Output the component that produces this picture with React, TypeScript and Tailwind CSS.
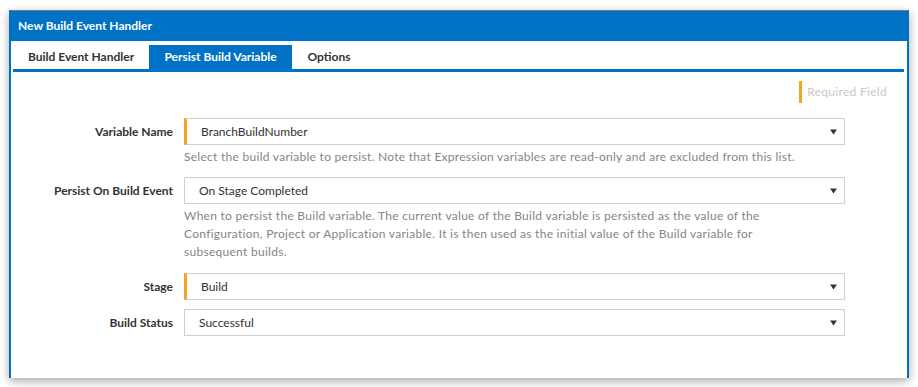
const font = { fontFamily: 'Lato, "Open Sans", sans-serif' };

const Arrow = () => (
  <svg width="7" height="7" viewBox="0 0 7 7" className="shrink-0">
    <path d="M0 1.5h7L3.5 6.5z" fill="#333" />
  </svg>
);

type SelectProps = { value: string; required?: boolean };

const FakeSelect = ({ value, required }: SelectProps) => (
  <div
    className={`flex items-center justify-between w-[661px] h-[27px] bg-white border border-[#cfcfcf] pr-[7px] ${
      required ? 'border-l-[3px] border-l-[#f5a32a] pl-[14px]' : 'pl-[14px]'
    }`}
  >
    <span className="text-[12px] text-[#333]">{value}</span>
    <Arrow />
  </div>
);

const Row = ({ label, children }: { label: string; children: React.ReactNode }) => (
  <div className="flex items-start">
    <div className="w-[162px] h-[27px] flex items-center justify-end text-[12px] font-bold text-[#333]">{label}</div>
    <div className="ml-[11px]">{children}</div>
  </div>
);

const Help = ({ children }: { children: React.ReactNode }) => (
  <p className="mt-[3px] w-[661px] text-[12px] leading-[18px] tracking-[0.28px] text-[#858585]">{children}</p>
);

export default function App() {
  return (
    <div className="w-[918px] h-[387px] bg-white pt-[10px] pl-[9px]" style={font}>
      <div className="w-[900px] h-[368px] bg-white border-x-2 border-[#0072c6] border-t border-t-[#7a7a7a] shadow-[0_3px_9px_rgba(0,0,0,0.35)] flex flex-col">
        <div className="h-[30px] bg-[#0072c6] flex items-center pl-[7px] text-[12px] font-bold text-white">
          New Build Event Handler
        </div>

        <div className="pt-[4px] px-[2px] pr-[3px]">
          <div className="flex border-b-[3px] border-[#0072c6] text-[12px] font-bold">
            <div className="w-[136px] h-[24px] flex items-center justify-center text-[#333]">Build Event Handler</div>
            <div className="w-[143px] h-[24px] flex items-center justify-center bg-[#0072c6] text-white">Persist Build Variable</div>
            <div className="w-[74px] h-[24px] flex items-center justify-center text-[#333]">Options</div>
          </div>
        </div>

        <div className="flex justify-end pt-[9px] pr-[20px]">
          <div className="flex items-center h-[22px] border-l-[3px] border-[#f5a32a] pl-[5px] text-[12px] tracking-[0.3px] text-[#c8c8c8]">
            Required Field
          </div>
        </div>

        <div className="mt-[15px] flex flex-col">
          <Row label="Variable Name">
            <FakeSelect value="BranchBuildNumber" required />
            <Help>
              Select the build variable to persist. Note that Expression variables are read-only and are excluded from this list.
            </Help>
          </Row>
          <div className="mt-[11px]">
            <Row label="Persist On Build Event">
              <FakeSelect value="On Stage Completed" />
              <Help>
                When to persist the Build variable. The current value of the Build variable is persisted as the value of the
                <br />
                Configuration, Project or Application variable. It is then used as the initial value of the Build variable for
                <br />
                subsequent builds.
              </Help>
            </Row>
          </div>
          <div className="mt-[12px]">
            <Row label="Stage">
              <FakeSelect value="Build" required />
            </Row>
          </div>
          <div className="mt-[9px]">
            <Row label="Build Status">
              <FakeSelect value="Successful" />
            </Row>
          </div>
        </div>
      </div>
    </div>
  );
}
